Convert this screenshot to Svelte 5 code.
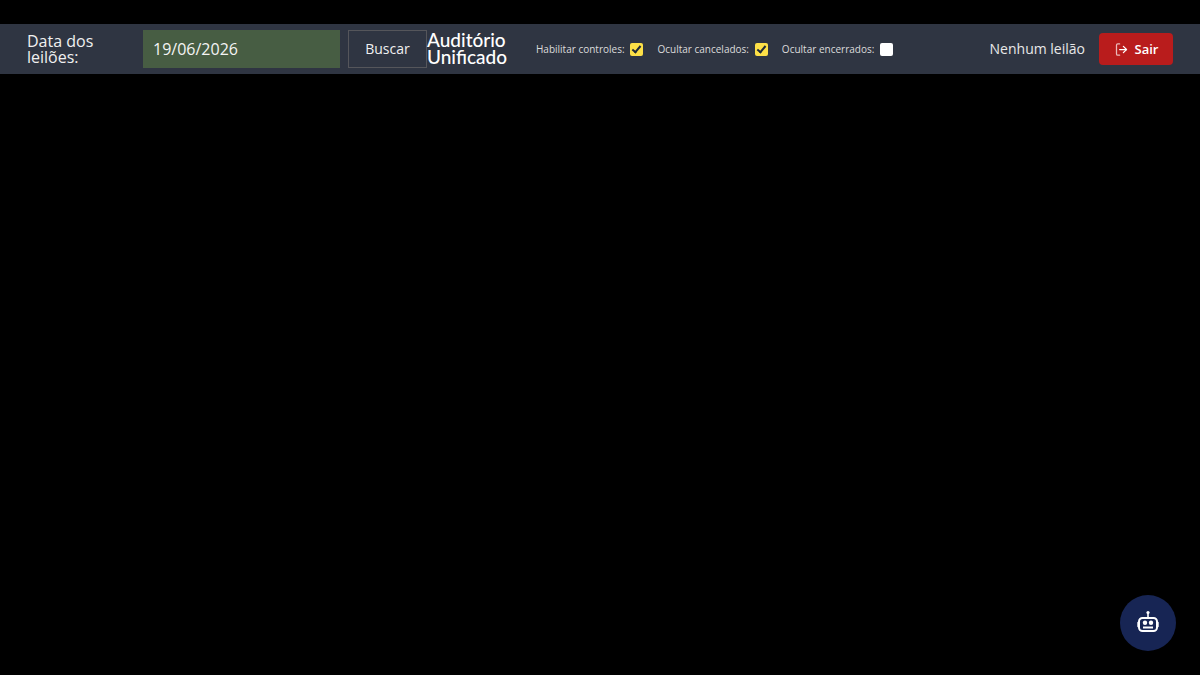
<script>
	let controls = $state(true);
	let cancelled = $state(true);
	let finished = $state(false);
</script>

<div class="page">
	<header class="bar">
		<div class="search">
			<label class="date-label" for="date">Data dos leilões:</label>
			<input id="date" class="date" type="text" value="19/06/2026" />
			<button class="search-btn">Buscar</button>
		</div>
		<h1 class="title">Auditório Unificado</h1>
		<div class="filters">
			<label class="check">
				Habilitar controles:
				<input type="checkbox" bind:checked={controls} />
			</label>
			<label class="check">
				Ocultar cancelados:
				<input type="checkbox" bind:checked={cancelled} />
			</label>
			<label class="check">
				Ocultar encerrados:
				<input type="checkbox" bind:checked={finished} />
			</label>
		</div>
		<div class="right">
			<span class="status">Nenhum leilão</span>
			<button class="logout">
				<svg viewBox="0 0 24 24" width="15" height="15" fill="none" stroke="currentColor" stroke-width="2" stroke-linecap="round" stroke-linejoin="round">
					<path d="M9 3H6a2 2 0 0 0-2 2v14a2 2 0 0 0 2 2h3" opacity="0.7" />
					<path d="M15 17l5-5-5-5" />
					<path d="M20 12H9" />
				</svg>
				Sair
			</button>
		</div>
	</header>

	<button class="bot" aria-label="Assistente">
		<svg viewBox="0 0 22 22" width="22" height="22" fill="none">
			<circle cx="11" cy="2.5" r="1.6" fill="#fff" />
			<path d="M11 3v5" stroke="#fff" stroke-width="1.6" />
			<rect x="2" y="8" width="18" height="13" rx="3.5" stroke="#fff" stroke-width="2" />
			<path d="M1 12.5v4M21 12.5v4" stroke="#fff" stroke-width="1.4" stroke-linecap="round" />
			<circle cx="8" cy="12.8" r="2.2" fill="#fff" />
			<circle cx="14" cy="12.8" r="2.2" fill="#fff" />
			<path d="M6 17.5h10" stroke="#fff" stroke-width="2" />
		</svg>
	</button>
</div>

<style>
	:global(body) {
		background: #000;
		font-family: 'Open Sans', sans-serif;
	}

	.page {
		height: 675px;
		padding-top: 24px;
		box-sizing: border-box;
		position: relative;
		overflow: hidden;
	}

	.bar {
		height: 50px;
		background: #2f3542;
		display: flex;
		align-items: center;
		padding: 0 27px;
		color: #fff;
	}

	.search {
		display: flex;
		align-items: center;
		height: 38px;
	}

	.date-label {
		width: 116px;
		font-size: 16px;
		line-height: 16px;
		color: #f0f0f0;
	}

	.date {
		width: 197px;
		height: 38px;
		box-sizing: border-box;
		background: #475d43;
		border: 0;
		padding: 0 10px 1px;
		color: #f4f4f4;
		font: 16px 'Open Sans', sans-serif;
	}

	.search-btn {
		width: 79px;
		height: 38px;
		margin-left: 8px;
		padding: 0 0 2px;
		background: transparent;
		border: 1px solid #55565b;
		color: #f0f0f0;
		font: 14px 'Open Sans', sans-serif;
	}

	.title {
		width: 82px;
		margin: 0;
		padding-bottom: 2px;
		font: 500 19px/17px Lato, sans-serif;
		color: #fff;
	}

	.filters {
		display: flex;
		align-items: center;
		gap: 14.2px;
		margin-left: 27px;
	}

	.check {
		display: flex;
		align-items: center;
		gap: 5.7px;
		font-size: 10px;
		color: #dcdcdc;
	}

	.check input {
		appearance: none;
		width: 13px;
		height: 13px;
		margin: 0;
		background: #fff;
		border-radius: 2px;
		position: relative;
	}

	.check input:checked {
		background: #fde047;
	}

	.check input:checked::after {
		content: '';
		position: absolute;
		left: 4px;
		top: 1px;
		width: 3px;
		height: 7px;
		border: solid #1f2937;
		border-width: 0 2px 2px 0;
		transform: rotate(40deg);
	}

	.right {
		margin-left: auto;
		display: flex;
		align-items: center;
		gap: 14px;
	}

	.status {
		font-size: 14px;
		line-height: 18px;
		padding-bottom: 1px;
		color: #e8e8e8;
	}

	.logout {
		width: 74px;
		height: 32px;
		display: flex;
		align-items: center;
		justify-content: center;
		gap: 6px;
		background: #b91c1c;
		border: 0;
		border-radius: 4px;
		color: #fff;
		font: 600 13px 'Open Sans', sans-serif;
	}

	.bot {
		position: absolute;
		right: 24px;
		bottom: 24px;
		width: 56px;
		height: 56px;
		border-radius: 50%;
		border: 0;
		background: #172554;
		display: flex;
		align-items: center;
		justify-content: center;
		padding: 0 0 4px;
	}
</style>
